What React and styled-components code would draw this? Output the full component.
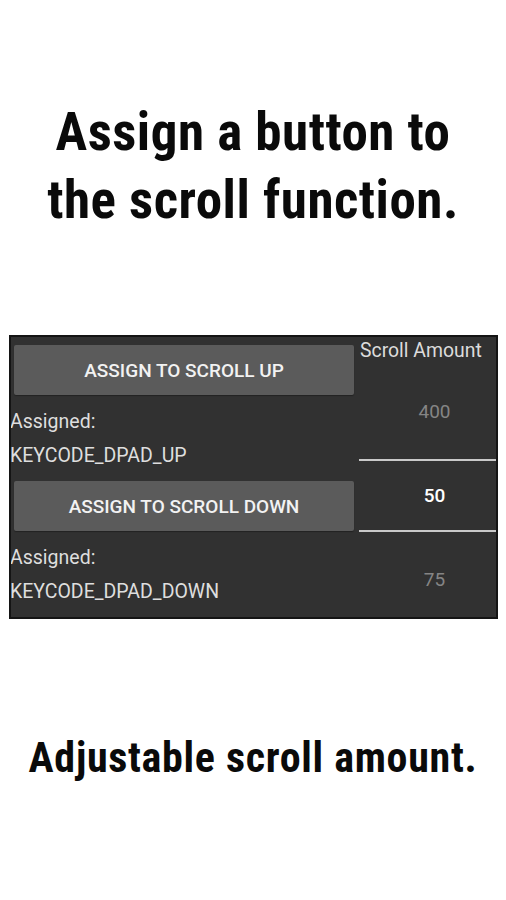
import styled, { createGlobalStyle } from "styled-components";

const GlobalStyle = createGlobalStyle`
  body {
    margin: 0;
    background: #ffffff;
  }
`;

const Page = styled.div`
  width: 506px;
  height: 900px;
  display: flex;
  flex-direction: column;
  align-items: center;
  background: #ffffff;
  overflow: hidden;
`;

const Headline = styled.h1`
  margin: ${(p) => p.$top}px 0 0;
  font-family: "Roboto Condensed", Roboto, sans-serif;
  font-stretch: condensed;
  font-weight: bold;
  font-size: ${(p) => p.$size}px;
  line-height: ${(p) => p.$lh}px;
  letter-spacing: ${(p) => p.$ls}px;
  text-align: center;
  color: #0a0a0a;
  white-space: nowrap;
`;

const Panel = styled.div`
  margin-top: 101px;
  align-self: flex-start;
  margin-left: 9px;
  width: 489px;
  height: 284px;
  box-sizing: border-box;
  border: 2px solid #141414;
  background: #313131;
  display: grid;
  grid-template-columns: 348px 1fr;
  overflow: hidden;
  font-family: Roboto, "Liberation Sans", sans-serif;
`;

const KeyColumn = styled.div`
  display: flex;
  flex-direction: column;
  margin-left: -1px;
`;

const KeyBlock = styled.div`
  display: flex;
  flex-direction: column;
  padding-top: 8px;
`;

const AssignButton = styled.button`
  margin: 0 0 10px 4px;
  width: 340px;
  height: 50px;
  padding: 0;
  border: none;
  border-radius: 2px;
  background: #5b5b5b;
  color: #f2f2f2;
  font-family: Roboto, "Liberation Sans", sans-serif;
  font-weight: 500;
  font-size: 19px;
  box-shadow: 0 1px 1px rgba(0, 0, 0, 0.3);
`;

const InfoLine = styled.div`
  height: 34px;
  line-height: 34px;
  font-size: 19.5px;
  color: #dedede;
  white-space: nowrap;
`;

const AmountColumn = styled.div`
  display: flex;
  flex-direction: column;
`;

const AmountLabel = styled.div`
  margin: 2px 0 0 1px;
  height: 24px;
  line-height: 24px;
  font-size: 19.4px;
  color: #dcdcdc;
  white-space: nowrap;
`;

const PickerRow = styled.div`
  height: ${(p) => p.$h}px;
  flex-shrink: 0;
  display: flex;
  align-items: center;
  justify-content: center;
  padding-left: 14px;
  font-size: 19px;
  font-weight: ${(p) => (p.$selected ? 500 : 400)};
  color: ${(p) => (p.$selected ? "#ffffff" : "#858585")};
`;

const Divider = styled.div`
  height: 2px;
  flex-shrink: 0;
  background: #c9c9c9;
`;

const keys = [
  { label: "ASSIGN TO SCROLL UP", code: "KEYCODE_DPAD_UP" },
  { label: "ASSIGN TO SCROLL DOWN", code: "KEYCODE_DPAD_DOWN" },
];

export default function App() {
  return (
    <Page>
      <GlobalStyle />
      <Headline $top={98} $size={53} $lh={68} $ls={0.5}>
        Assign a button to
        <br />
        the scroll function.
      </Headline>
      <Panel>
        <KeyColumn>
          {keys.map((k) => (
            <KeyBlock key={k.code}>
              <AssignButton>{k.label}</AssignButton>
              <InfoLine>Assigned:</InfoLine>
              <InfoLine>{k.code}</InfoLine>
            </KeyBlock>
          ))}
        </KeyColumn>
        <AmountColumn>
          <AmountLabel>Scroll Amount</AmountLabel>
          <PickerRow $h={96}>400</PickerRow>
          <Divider />
          <PickerRow $h={69} $selected>
            50
          </PickerRow>
          <Divider />
          <PickerRow $h={94}>75</PickerRow>
        </AmountColumn>
      </Panel>
      <Headline $top={114} $size={42} $lh={50} $ls={0.7}>
        Adjustable scroll amount.
      </Headline>
    </Page>
  );
}
